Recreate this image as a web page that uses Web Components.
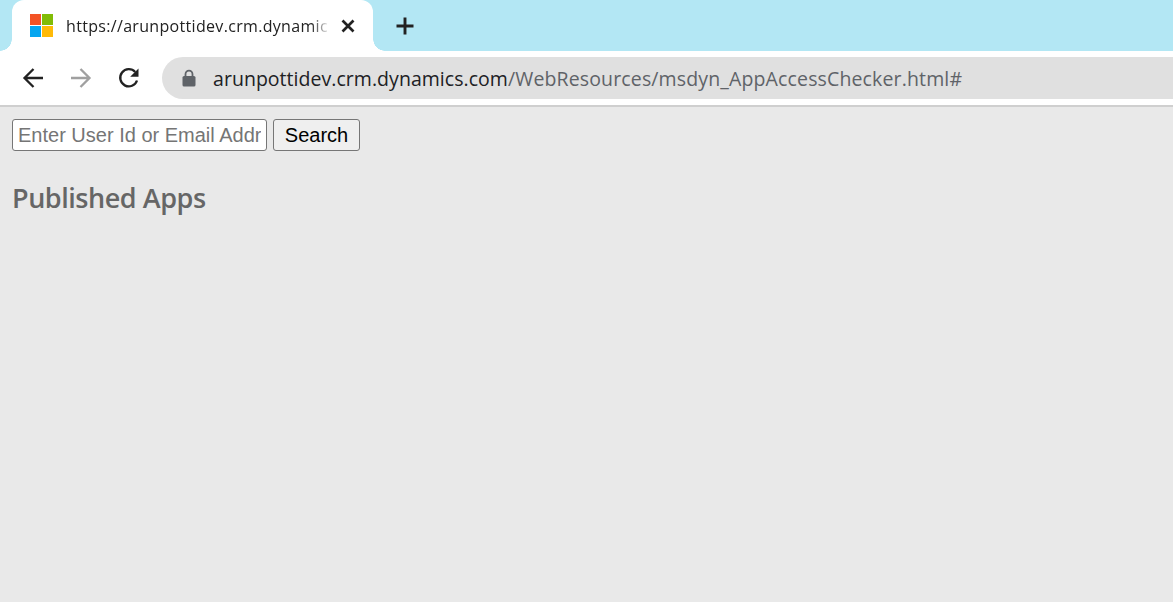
<!DOCTYPE html>
<html>
<head>
<meta charset="utf-8">
<title>App Access Checker</title>
<style>
  html, body { margin: 0; height: 100%; overflow: hidden; background: #e9e9e9; }
  body { display: flex; flex-direction: column; }
</style>
</head>
<body>
<browser-tabs title-text="https://arunpottidev.crm.dynamic"></browser-tabs>
<browser-toolbar host-text="arunpottidev.crm.dynamics.com" path-text="/WebResources/msdyn_AppAccessChecker.html#"></browser-toolbar>
<access-checker></access-checker>

<script>
// Tab strip: one active tab plus the new-tab button
class BrowserTabs extends HTMLElement {
  constructor() {
    super();
    this.attachShadow({ mode: 'open' });
    this.shadowRoot.innerHTML = `
<style>
  :host { display: flex; height: 51px; flex: none; background: #b3e7f4; padding-left: 12px; align-items: flex-start; font-family: "Open Sans", sans-serif; }
  .tab { position: relative; display: flex; align-items: center; width: 361px; height: 51px; box-sizing: border-box; padding: 0 18px 0 18px; background: #fff; border-radius: 12px 12px 0 0; }
  .tab::before, .tab::after { content: ""; position: absolute; bottom: 0; width: 12px; height: 12px; }
  .tab::before { left: -12px; background: radial-gradient(circle at 0 0, #b3e7f4 11.5px, #fff 12px); }
  .tab::after { right: -12px; background: radial-gradient(circle at 100% 0, #b3e7f4 11.5px, #fff 12px); }
  .logo { width: 23px; height: 23px; flex: none; }
  .title { margin-left: 13px; flex: 1; min-width: 0; white-space: nowrap; font-size: 16px; color: #222; letter-spacing: 0.32px;
    -webkit-mask-image: linear-gradient(to right, #000 245px, transparent 264px); mask-image: linear-gradient(to right, #000 245px, transparent 264px); }
  .close { width: 14px; height: 14px; flex: none; margin-left: 4px; }
  .plus { width: 20px; height: 20px; margin: 16px 0 0 22px; flex: none; }
</style>
<div class="tab">
  <svg class="logo" viewBox="0 0 23 23">
    <rect width="11" height="11" fill="#f35325"/><rect x="12" width="11" height="11" fill="#81bc06"/>
    <rect y="12" width="11" height="11" fill="#05a6f0"/><rect x="12" y="12" width="11" height="11" fill="#ffba08"/>
  </svg>
  <span class="title"></span>
  <svg class="close" viewBox="0 0 14 14"><path d="M1.5 1.5l11 11M12.5 1.5l-11 11" stroke="#222" stroke-width="2.7" fill="none"/></svg>
</div>
<svg class="plus" viewBox="0 0 20 20"><path d="M10 1.5v17M1.5 10h17" stroke="#222" stroke-width="2.9" fill="none"/></svg>`;
    this.shadowRoot.querySelector('.title').textContent = this.getAttribute('title-text');
  }
}
customElements.define('browser-tabs', BrowserTabs);

// Back / forward / reload and the address pill, which runs off the right edge
class BrowserToolbar extends HTMLElement {
  constructor() {
    super();
    this.attachShadow({ mode: 'open' });
    this.shadowRoot.innerHTML = `
<style>
  :host { display: flex; align-items: flex-start; height: 54px; flex: none; background: #fff; border-bottom: 2px solid #cfcfcf; font-family: "Open Sans", sans-serif; overflow: hidden; }
  .nav { width: 24px; height: 24px; flex: none; margin-top: 15px; }
  .back { margin-left: 21px; }
  .fwd { margin-left: 24px; }
  .reload { margin-left: 24px; }
  .pill { display: flex; align-items: center; height: 42px; margin: 6px 0 0 21px; flex: 1; min-width: 0; background: #e0e0e0; border-radius: 21px 0 0 21px; padding-left: 20px; white-space: nowrap; font-size: 19.5px; letter-spacing: 0.04px; }
  .lock { width: 14px; height: 18px; flex: none; margin-right: 17px; }
  .host { color: #202124; }
  .path { color: #5f6368; letter-spacing: 0.14px; }
</style>
<svg class="nav back" viewBox="0 0 24 24"><path d="M22 12H3.5M12.5 3l-9 9 9 9" fill="none" stroke="#222" stroke-width="2.3"/></svg>
<svg class="nav fwd" viewBox="0 0 24 24"><path d="M2 12h18.5M11.5 3l9 9-9 9" fill="none" stroke="#a0a0a0" stroke-width="2.3"/></svg>
<svg class="nav reload" viewBox="0 0 24 24"><path d="M20 14.5A8.6 8.6 0 1 1 18.2 6" fill="none" stroke="#222" stroke-width="2.3"/><path d="M21.5 2.5v8.3h-8.3z" fill="#222"/></svg>
<div class="pill">
  <svg class="lock" viewBox="0 0 14 18"><path d="M3.5 8V5.2a3.5 3.5 0 0 1 7 0V8" fill="none" stroke="#5f6368" stroke-width="1.8"/><rect x="0.5" y="7" width="13" height="10.5" rx="1.6" fill="#5f6368"/></svg>
  <span class="host"></span><span class="path"></span>
</div>`;
    this.shadowRoot.querySelector('.host').textContent = this.getAttribute('host-text');
    this.shadowRoot.querySelector('.path').textContent = this.getAttribute('path-text');
  }
}
customElements.define('browser-toolbar', BrowserToolbar);

// The page itself: search form and the Published Apps heading
class AccessChecker extends HTMLElement {
  constructor() {
    super();
    this.attachShadow({ mode: 'open' });
    this.shadowRoot.innerHTML = `
<style>
  :host { display: block; flex: 1; background: #e9e9e9; padding: 12px 12px 0; }
  form { display: flex; gap: 6px; margin: 0; }
  input, button { box-sizing: border-box; height: 32px; margin: 0; font-family: "Liberation Sans", Arial, sans-serif; font-size: 20px; border: 1px solid #767676; border-radius: 3px; }
  input { width: 255px; padding: 0 5px; background: #fff; color: #000; outline: none; }
  input::placeholder { color: #757575; opacity: 1; }
  button { width: 87px; padding: 0; background: #efefef; color: #000; }
  h2 { margin: 28px 0 0; font-family: "Open Sans", sans-serif; font-weight: 600; font-size: 27px; line-height: 38px; letter-spacing: -0.45px; color: #666; }
</style>
<form onsubmit="return false">
  <input type="text" placeholder="Enter User Id or Email Address">
  <button type="button">Search</button>
</form>
<h2>Published Apps</h2>`;
  }
}
customElements.define('access-checker', AccessChecker);
</script>
</body>
</html>
